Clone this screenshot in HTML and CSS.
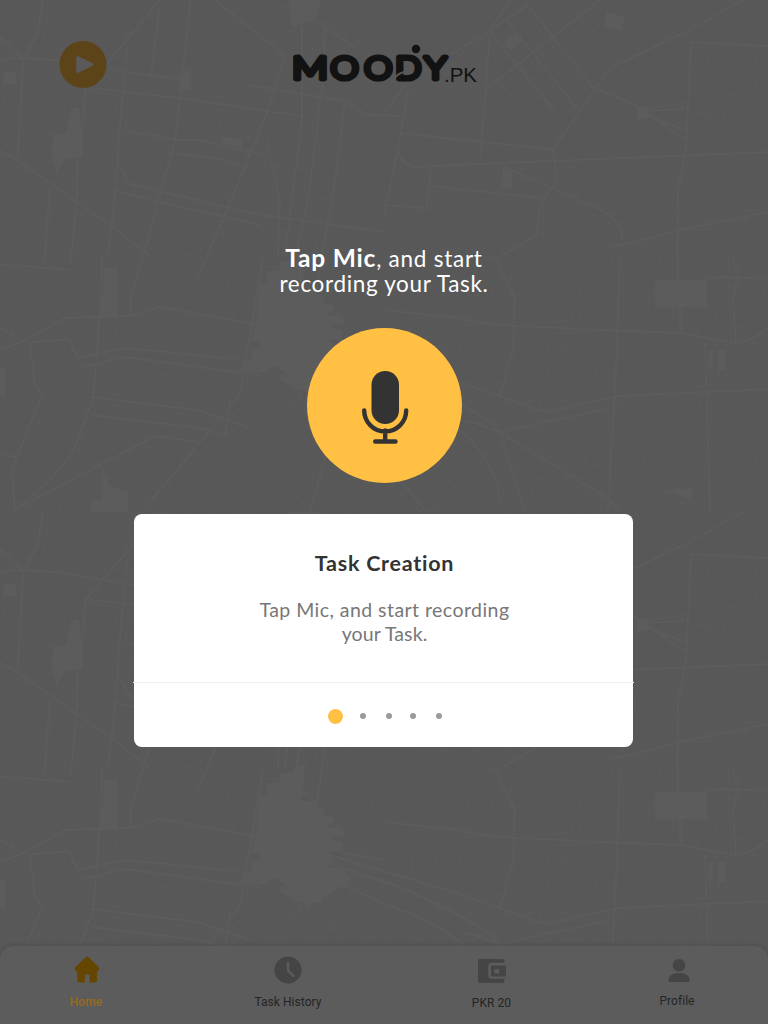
FILE: index.html
```html
<!DOCTYPE html>
<html lang="en">
<head>
<meta charset="utf-8">
<title>Moody.pk</title>
<link rel="stylesheet" href="styles.css">
</head>
<body>
<svg class="map" width="768" height="1024" viewBox="0 0 768 1024" aria-hidden="true">
  <defs>
    <pattern id="streets-a" width="31" height="37" patternUnits="userSpaceOnUse" patternTransform="rotate(8)">
      <path class="minor" d="M0 4H31M0 15H31M0 27H18M6 0V27M18 4V37M27 15V37"/>
    </pattern>
    <pattern id="streets-b" width="34" height="29" patternUnits="userSpaceOnUse" patternTransform="rotate(-2)">
      <path class="minor" d="M0 4H34M0 13H25M0 22H34M5 0V29M16 4V22M25 0V29"/>
    </pattern>
    <pattern id="streets-c" width="26" height="31" patternUnits="userSpaceOnUse" patternTransform="rotate(-38)">
      <path class="minor" d="M0 5H26M0 17H26M6 0V31M17 5V17"/>
    </pattern>
    <g id="tile">
      <path fill="url(#streets-a)" d="M0 0H384V430L240 395 150 512H0Z"/>
      <path fill="url(#streets-c)" d="M400 80L490 30 530 0H740L610 68 560 140 400 120Z"/>
      <path fill="url(#streets-b)" d="M410 165H768V512H530L500 430 410 400ZM690 45H768V150H690Z"/>
      <path fill="url(#streets-c)" d="M240 400L500 430 525 512H150Z"/>
      <path class="park" d="M288 0h34l-8 20-22 7zM53 134h13l5-26h8l4 26v24H66l-9 15-5-15zM220 136l22 3v9l-20-4zM180 70h11v20h-12zM655 280h52v27h-52zM104 268h14v48h-17zM606 12l19 4-4 15-17-5zM504 42l12-10 6 8-12 12zM502 169h10v18h-10zM637 107h10v12h-10zM708 350h5v20h-5zM718 350h7v20h-7zM4 72h12v12H2zM0 366l5 2v28H0zM102 466l8 20 18 6v20H91v-12h11zM666 490l26-2v12z"/>
      <path class="park" d="M259 283h8v-12h13v-10h18l-3-8h10l-2 24 7 4-9 3v5h17l-4 8h10v8h9v6h-8l5 5h13v8h-12l4 6h7v10h-13l5 8h-4v8h12l9 10-4 8h-7l-10 8-8 4v5h-12v4l-8-6-9 2v-5l-13-5v-6h7l-8-8-12 1v4h-28l4-12h9v-10h8v-8h-8v-8l5-10z"/>
      <path class="road" d="M160 0L110 60 85 88 83 126M43 0L38 30 23 62 18 155M0 36L24 60M0 62L12 58 60 60 125 72 180 80M90 88L180 98 300 116M160 5L150 80M190 0L180 100 175 140 145 250 130 300 131 316M128 45L122 100 115 190 108 256M0 150L20 162 110 225 150 256M214 0L285 55 270 105 225 215 197 278M302 25V120L285 256M325 20L323 80 308 200 290 285M345 100L335 180 322 256 300 400M122 130L180 140 200 140 265 155M267 142L280 200 278 256M167 153L220 159 250 168M117 162L130 184 260 215 384 232M115 190L150 200 260 225"/>
      <path class="road" d="M511 0L490 30 485 100 480 160M315 22L345 40 357 50M250 85L345 101 365 114 400 116M384 112L410 80 490 30 530 4M485 90L600 0M490 32L554 111M508 22L578 110M530 8L595 90M743 0L690 30 610 68 560 140 553 152 557 180 540 205 537 235 495 260M691 42L686 150 678 190 677 256M691 42L768 46M400 133L555 150M398 150Q400 163 415 167L500 163 768 152M500 165L545 185 590 205Q622 217 622 240M595 88L635 105 685 140M768 212L680 230 610 248M684 103L640 110M684 108L640 112 684 130M408 90L398 150 384 215M430 186L540 198M384 205L427 208 430 172"/>
      <path class="road" d="M0 264L70 270M50 186L44 265M78 120L77 200 71 260M0 327L23 342M0 350L25 340 65 318 130 316 160 307 250 323 384 348M25 343L68 339 78 358 125 348 235 359M80 368L125 357 260 375M102 256L100 316 93 400 75 447Q60 475 15 510M30 345L35 385 42 395 12 470 15 512M0 455L18 457M90 397L180 408 200 411 250 428M90 415L200 428 225 435 230 400M15 510L100 465 155 436 200 442M145 508L240 395 263 256M320 348L400 375Q480 410 500 432M335 370L400 398Q490 430 500 500M384 310L450 317 500 325 600 330 680 333 735 343Q748 344 768 328M495 256L515 298 513 350 500 395M330 343L460 382 545 412 620 396 768 389M500 432L610 408M465 420L500 432 610 500 620 512M500 432L525 512M620 256L616 370 608 512M705 342L710 512M330 440L310 512M400 480L427 512M732 256L738 275 733 300 736 342M708 280L720 277 768 279M678 256V280M680 308V333"/>
    </g>
  </defs>
  <use href="#tile"/>
  <use href="#tile" y="512"/>
</svg>

<div class="screen">
  <header class="header">
    <svg class="play" width="48" height="49" viewBox="0 0 48 49" role="img" aria-label="Play">
      <circle cx="24" cy="24.500" r="23.500" fill="#5d4418"/>
      <path d="M18.500 17.300V31.700L33 24.500Z" fill="#5a5a5a" stroke="#5a5a5a" stroke-width="2.600" stroke-linejoin="round"/>
    </svg>
    <svg class="logo" width="190" height="46" viewBox="0 0 190 46" role="img" aria-label="MOODY.PK">
      <g class="wordmark">
        <text x="2.300" y="38.300" textLength="35.500" lengthAdjust="spacingAndGlyphs">M</text>
        <text x="40.500" y="38.300" textLength="28" lengthAdjust="spacingAndGlyphs">O</text>
        <text x="74.300" y="38.300" textLength="28" lengthAdjust="spacingAndGlyphs">O</text>
        <text x="105.300" y="38.300" textLength="26" lengthAdjust="spacingAndGlyphs">D</text>
        <text x="134.800" y="38.300" textLength="21.500" lengthAdjust="spacingAndGlyphs">Y</text>
      </g>
      <circle cx="126" cy="8" r="5.600" fill="#585858"/>
      <circle cx="126" cy="8" r="4.200" fill="#121212"/>
      <path d="M104.500 37.500Q107 33 114 31" fill="none" stroke="#585858" stroke-width="2"/>
      <text class="suffix" x="154" y="41" textLength="33" lengthAdjust="spacingAndGlyphs">.PK</text>
    </svg>
  </header>

  <main class="main">
    <h1 class="prompt"><span class="line first"><b>Tap Mic</b>, and start</span><span class="line second">recording your Task.</span></h1>
    <div class="mic">
      <svg width="155" height="155" viewBox="0 0.500 155 155" role="img" aria-label="Microphone">
        <rect x="64.500" y="43.500" width="27.500" height="53" rx="13.700" fill="#333"/>
        <path d="M57.200 83A21 21 0 0 0 99.200 83M78.200 103V114M68.200 114H88.500" fill="none" stroke="#333" stroke-width="4.400" stroke-linecap="round"/>
      </svg>
    </div>
    <section class="card">
      <div class="card-body">
        <h2 class="card-title">Task Creation</h2>
        <p class="card-text"><span class="line third">Tap Mic, and start recording</span><span class="line fourth">your Task.</span></p>
      </div>
      <div class="steps"><i class="dot active"></i><i class="dot"></i><i class="dot"></i><i class="dot near"></i><i class="dot"></i></div>
    </section>
  </main>

  <nav class="nav">
    <a class="tab home">
      <svg width="26" height="28" viewBox="0 0 26 28"><path d="M11.200 1.400Q13-.3 14.800 1.400L24.700 11.200Q26.300 14.500 23 15.500V24Q23 26.500 20.500 26.500H15.500V18.500H10.800V26.500H5.500Q3.200 26.500 3.200 24V15.500Q-.3 14.500 1.300 11.200Z" fill="#644600"/></svg>
      <span>Home</span>
    </a>
    <a class="tab history">
      <svg width="28" height="28" viewBox="0 0 28 28"><circle cx="14" cy="14" r="13.500" fill="#454545"/><path d="M14 7V14.500L19.500 20" fill="none" stroke="#5c5c5c" stroke-width="2.400" stroke-linecap="round" stroke-linejoin="round"/></svg>
      <span>Task History</span>
    </a>
    <a class="tab wallet">
      <svg width="28" height="28" viewBox="0 0 28 28"><path d="M2 3H24Q26.500 3 26.500 6V6.700H14Q10.200 6.700 10.200 10.500V19Q10.200 22.800 14 22.800H26.500V24Q26.500 27 24 27H2Q0 27 0 25V5Q0 3 2 3Z" fill="#454545"/><path fill-rule="evenodd" d="M13 9.500H28V20.500H13ZM18 13Q16 13 16 15.200T18 17.400H19.500Q21.500 17.400 21.500 15.200T19.500 13Z" fill="#454545"/></svg>
      <span>PKR 20</span>
    </a>
    <a class="tab profile">
      <svg width="22" height="26" viewBox="0 0 22 26"><circle cx="11" cy="9.200" r="6.300" fill="#454545"/><path d="M.5 26V24C.5 19 5 17 11 17S21.500 19 21.500 24V26Z" fill="#454545"/></svg>
      <span>Profile</span>
    </a>
  </nav>
</div>
</body>
</html>
```
FILE: styles.css
```css
* { box-sizing: border-box; }
html, body { margin: 0; }
body {
  width: 768px;
  height: 1024px;
  overflow: hidden;
  background: #585858;
  font-family: Lato, "Open Sans", sans-serif;
}
svg { display: block; }
.map { position: absolute; top: 0; left: 0; }
.minor { fill: none; stroke: #5a5a5a; stroke-width: .7; }
.road { fill: none; stroke: #5c5c5c; stroke-width: 2; stroke-linejoin: round; }
.park { fill: #5c5c5c; }

.screen { position: relative; display: flex; flex-direction: column; height: 1024px; }
.header { display: flex; height: 245px; padding: 40px 0 0 59px; }
.logo { margin: 1px 0 0 183px; overflow: visible; }
.wordmark {
  font: 300 31.5px Lato, sans-serif;
  fill: #121212;
  stroke: #121212;
  stroke-width: 5.2px;
  stroke-linejoin: round;
}
.suffix { font: 20px "Liberation Sans", Arial, sans-serif; fill: #121212; }

.main { display: flex; flex-direction: column; align-items: center; height: 701px; }
.prompt {
  margin: 0;
  height: 83px;
  color: #fff;
  font-size: 22.5px;
  font-weight: 400;
  line-height: 25px;
  text-align: center;
}
.prompt b { font-size: 24.5px; font-weight: 700; letter-spacing: .8px; }
.line { display: block; white-space: nowrap; }
.first { letter-spacing: .75px; }
.second { letter-spacing: .66px; }
.mic { width: 155px; height: 155px; margin-left: 1px; border-radius: 50%; background: #ffc043; }
.card { width: 499px; height: 233px; margin: 31px 1px 0 0; border-radius: 8px; background: #fff; text-align: center; }
.card-body { height: 169px; margin: 0 -1px; border-bottom: 1px solid #efefef; padding: 35px 0 0 2px; }
.card-title { margin: 0; color: #333; font-size: 21.5px; font-weight: 700; line-height: 28px; letter-spacing: .75px; }
.card-text { margin: 21px 0 0; color: #777; font-size: 19.5px; line-height: 24px; }
.third { letter-spacing: .45px; }
.fourth { letter-spacing: .1px; }
.steps { display: flex; align-items: center; gap: 20px; padding: 11px 0 0 194px; height: 55px; }
.dot { width: 6px; height: 6px; border-radius: 50%; background: #9b9b9b; }
.active { width: 15px; height: 15px; margin-right: -3px; background: #ffc043; }
.near { margin-left: -2px; }

.nav {
  display: flex;
  height: 78px;
  border-radius: 14px 14px 0 0;
  background: #5c5c5c;
  box-shadow: 0 -1px 5px rgba(0, 0, 0, .12);
  font: 12px/16px Roboto, sans-serif;
  color: #242424;
}
.tab { display: flex; flex: none; flex-direction: column; align-items: center; padding-top: 10px; gap: 10px; letter-spacing: .05px; }
.home { width: 172px; color: #966b1c; font-weight: 500; }
.home svg { margin-left: 2px; }
.history { width: 232px; }
.wallet { width: 175px; gap: 11px; }
.profile { width: 189px; padding-left: 7px; gap: 11px; }
.profile svg { margin-left: 3px; }
```
